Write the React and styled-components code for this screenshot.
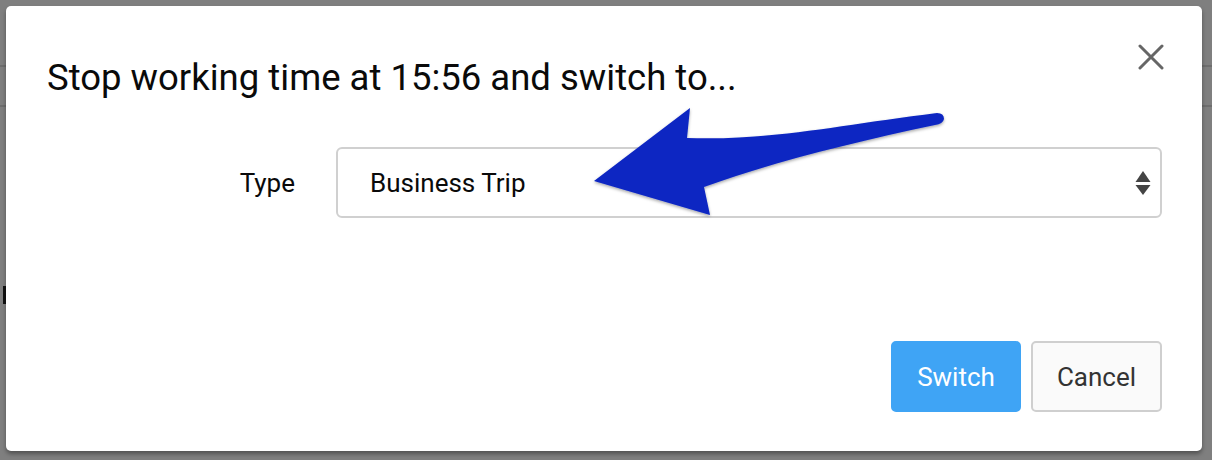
import styled, { createGlobalStyle } from "styled-components";

const GlobalStyle = createGlobalStyle`
  html, body {
    margin: 0;
    padding: 0;
    background: #7f7f7f;
  }
  body {
    font-family: Roboto, "Liberation Sans", sans-serif;
  }
`;

export default function App() {
  return (
    <>
      <GlobalStyle />
      <Backdrop>
        <Modal>
          <Header>
            <Title>Stop working time at 15:56 and switch to...</Title>
            <CloseButton aria-label="Close">
              <svg width="26" height="26" viewBox="0 0 26 26">
                <path
                  d="M2 2 L24 24 M24 2 L2 24"
                  stroke="#666"
                  strokeWidth="3"
                  strokeLinecap="round"
                />
              </svg>
            </CloseButton>
          </Header>
          <Body>
            <FieldRow>
              <Label>Type</Label>
              <SelectBox>
                <span>Business Trip</span>
                <svg width="16" height="26" viewBox="0 0 16 26">
                  <path d="M8 1 L15.5 12 L0.5 12 Z" fill="#444" />
                  <path d="M0.5 15 L15.5 15 L8 25 Z" fill="#444" />
                </svg>
              </SelectBox>
            </FieldRow>
            <Pointer viewBox="0 0 360 120" width="360" height="120">
              <defs>
                <filter id="sh" x="-10%" y="-10%" width="120%" height="130%">
                  <feDropShadow dx="0" dy="1.5" stdDeviation="1.5" floodColor="#000" floodOpacity="0.35" />
                </filter>
              </defs>
              <path
                filter="url(#sh)"
                fill="#0a25c2"
                d="M14 88 L110 15 L107 45 C190 48 260 32 357 20 Q364 20 364 26 Q363 31 355 32 C270 50 190 70 124 94 L130 122 Z"
              />
            </Pointer>
          </Body>
          <Footer>
            <Button $primary>Switch</Button>
            <Button>Cancel</Button>
          </Footer>
        </Modal>
      </Backdrop>
    </>
  );
}

const Backdrop = styled.div`
  width: 1212px;
  height: 460px;
  box-sizing: border-box;
  padding: 6px 10px 9px 6px;
  background-color: #7f7f7f;
  background-repeat: no-repeat;
  background-image: linear-gradient(#111, #111),
    linear-gradient(
      to bottom,
      transparent 65px,
      #6e6e6e 65px,
      #6e6e6e 67px,
      transparent 67px,
      transparent 105px,
      #6e6e6e 105px,
      #6e6e6e 107px,
      transparent 107px
    );
  background-size: 3px 18px, 100% 100%;
  background-position: 3px 286px, 0 0;
`;

const Modal = styled.div`
  position: relative;
  height: 100%;
  background: #fff;
  border-radius: 5px;
  box-shadow: 0 3px 4px rgba(0, 0, 0, 0.35);
  display: flex;
  flex-direction: column;
  box-sizing: border-box;
`;

const Header = styled.div`
  display: flex;
  align-items: flex-start;
  justify-content: space-between;
  padding: 50px 38px 0 41px;
`;

const Title = styled.h1`
  margin: 0;
  font-size: 36.5px;
  font-weight: 400;
  line-height: 44px;
  color: #0a0a0a;
`;

const CloseButton = styled.button`
  border: none;
  background: none;
  padding: 0;
  margin-top: -12px;
  cursor: pointer;
  display: flex;
`;

const Body = styled.div`
  position: relative;
  flex: 1;
  padding: 101px 40px 0 0;
`;

const FieldRow = styled.div`
  display: grid;
  grid-template-columns: 289px 1fr;
  column-gap: 41px;
  align-items: center;
  margin-top: -54px;
`;

const Label = styled.label`
  text-align: right;
  font-size: 26px;
  color: #0a0a0a;
`;

const SelectBox = styled.div`
  height: 71px;
  box-sizing: border-box;
  border: 2px solid #d0d0d0;
  border-radius: 6px;
  display: flex;
  align-items: center;
  justify-content: space-between;
  padding: 0 9px 0 32px;
  font-size: 26px;
  color: #0a0a0a;
`;

const Pointer = styled.svg`
  position: absolute;
  left: 574px;
  top: -7px;
  overflow: visible;
`;

const Footer = styled.div`
  display: flex;
  justify-content: flex-end;
  gap: 10px;
  padding: 0 40px 39px 0;
`;

const Button = styled.button`
  height: 71px;
  width: ${(p) => (p.$primary ? "130px" : "131px")};
  box-sizing: border-box;
  border-radius: 5px;
  font-family: Roboto, "Liberation Sans", sans-serif;
  font-size: 26px;
  border: 2px solid ${(p) => (p.$primary ? "#3fa4f5" : "#cfcfcf")};
  background: ${(p) => (p.$primary ? "#3fa4f5" : "#fafafa")};
  color: ${(p) => (p.$primary ? "#fff" : "#333")};
  cursor: pointer;
`;
